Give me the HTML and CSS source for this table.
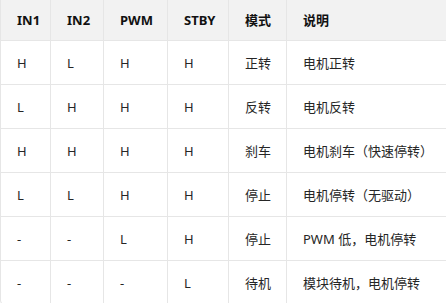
FILE: index.html
```html
<!DOCTYPE html>
<html lang="zh">
<head>
<meta charset="utf-8">
<link rel="stylesheet" href="styles.css">
</head>
<body>
<div class="wrap">
<table class="truth">
<colgroup>
<col class="c1"><col class="c2"><col class="c3"><col class="c4"><col class="c5"><col class="c6">
</colgroup>
<thead>
<tr><th>IN1</th><th>IN2</th><th>PWM</th><th>STBY</th><th>模式</th><th class="last">说明</th></tr>
</thead>
<tbody>
<tr><td>H</td><td>L</td><td>H</td><td>H</td><td>正转</td><td class="last">电机正转</td></tr>
<tr><td>L</td><td>H</td><td>H</td><td>H</td><td>反转</td><td class="last">电机反转</td></tr>
<tr><td>H</td><td>H</td><td>H</td><td>H</td><td>刹车</td><td class="last">电机刹车（快速停转）</td></tr>
<tr><td>L</td><td>L</td><td>H</td><td>H</td><td>停止</td><td class="last">电机停转（无驱动）</td></tr>
<tr><td>-</td><td>-</td><td>L</td><td>H</td><td>停止</td><td class="last">PWM 低，电机停转</td></tr>
<tr><td>-</td><td>-</td><td>-</td><td>L</td><td>待机</td><td class="last">模块待机，电机停转</td></tr>
</tbody>
</table>
</div>
</body>
</html>
```

FILE: styles.css
```css
html, body {
  margin: 0;
  padding: 0;
  background: #ffffff;
  overflow: hidden;
}
body {
  width: 446px;
  height: 303px;
  font-family: "Noto Sans", "Noto Sans CJK SC", sans-serif;
  font-size: 13px;
  color: #262626;
}
.wrap {
  width: 460px;
  border: 1px solid #e6e6e6;
  border-top: none;
  border-radius: 0 0 6px 6px;
  overflow: hidden;
}
.truth {
  border-collapse: separate;
  border-spacing: 0;
  table-layout: fixed;
  width: 100%;
}
.c1 { width: 50px; }
.c2 { width: 53px; }
.c3 { width: 64px; }
.c4 { width: 61px; }
.c5 { width: 58px; }
.truth th,
.truth td {
  text-align: left;
  padding: 0 0 0 16px;
  border-right: 1px solid #e6e6e6;
  border-bottom: 1px solid #e6e6e6;
  white-space: nowrap;
  line-height: 18px;
  overflow: hidden;
}
.truth th {
  height: 40px;
  background: #f2f2f2;
  font-weight: 700;
  color: #111111;
}
.truth td {
  height: 43px;
}
.truth .last {
  border-right: none;
}
```
